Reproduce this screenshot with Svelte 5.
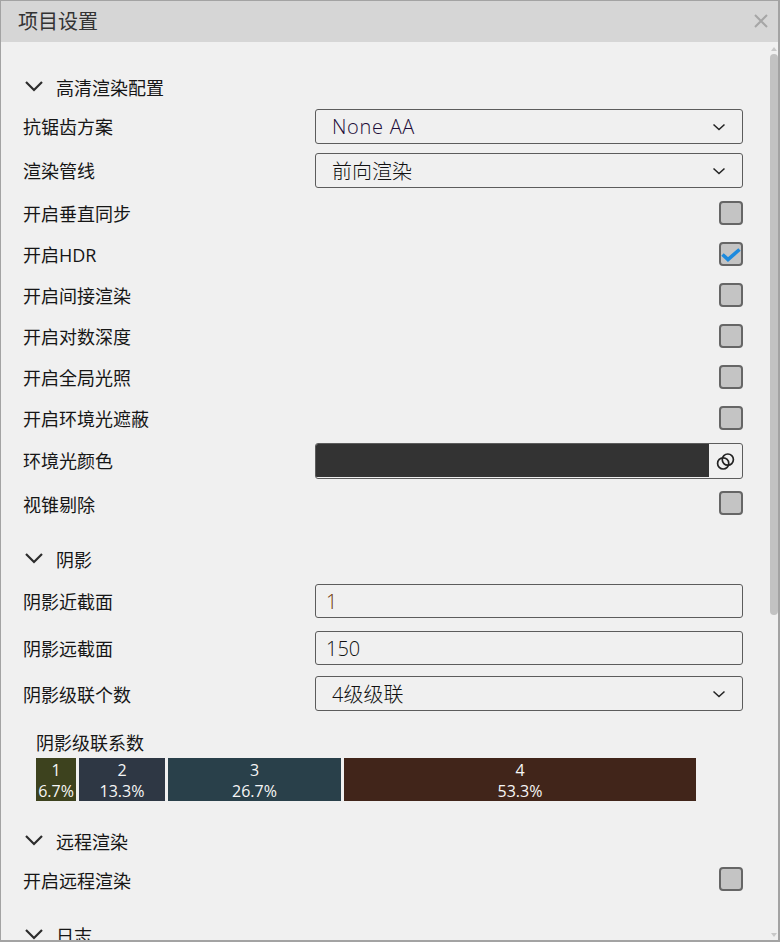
<script>
  const shadowRows = [
    { label: '阴影近截面', value: '1', color: '#6e3200' },
    { label: '阴影远截面', value: '150', color: '#111' }
  ];
  const cascades = [
    { n: 1, pct: '6.7%', w: 40, bg: '#3d421e' },
    { n: 2, pct: '13.3%', w: 86, bg: '#2e3744' },
    { n: 3, pct: '26.7%', w: 173, bg: '#29404a' },
    { n: 4, pct: '53.3%', w: 352, bg: '#41251a' }
  ];
  const toggles = [
    { label: '开启HDR', on: true },
    { label: '开启间接渲染' },
    { label: '开启对数深度' },
    { label: '开启全局光照' },
    { label: '开启环境光遮蔽' }
  ];
</script>

{#snippet chevron()}
  <svg class="chev" width="20" height="12" viewBox="0 0 20 12"><path d="M2 2l8 8 8-8" fill="none" stroke="#2c2c2c" stroke-width="2.2" /></svg>
{/snippet}

{#snippet heading(text)}
  <div class="heading">
    {@render chevron()}
    <span>{text}</span>
  </div>
{/snippet}

{#snippet check(on)}
  <span class="check">
    {#if on}
      <svg width="22" height="22" viewBox="0 0 22 22"><path d="M2.5 11.5l5.5 5 11.5-10" fill="none" stroke="#1c8ade" stroke-width="3.6" /></svg>
    {/if}
  </span>
{/snippet}

{#snippet select(text, cls)}
  <div class="field select {cls}">
    <span>{text}</span>
    <svg width="14" height="8" viewBox="0 0 14 8"><path d="M1.5 1.5L7 6.5l5.5-5" fill="none" stroke="#222" stroke-width="1.5" /></svg>
  </div>
{/snippet}

<div class="window">
  <header>
    <span>项目设置</span>
    <svg width="16" height="16" viewBox="0 0 16 16"><path d="M2 2l12 12M14 2L2 14" stroke="#a6a6a6" stroke-width="2" /></svg>
  </header>

  <div class="body">
    <div class="content">
      {@render heading('高清渲染配置')}
      <div class="row first"><label>抗锯齿方案</label>{@render select('None AA', 'latin')}</div>
      <div class="row second"><label>渲染管线</label>{@render select('前向渲染', '')}</div>
      <div class="row toggle vsync"><label>开启垂直同步</label>{@render check(false)}</div>
      {#each toggles as t}
        <div class="row toggle"><label>{t.label}</label>{@render check(t.on)}</div>
      {/each}
      <div class="row colour">
        <label>环境光颜色</label>
        <div class="swatch">
          <span class="fill"></span>
          <span class="link">
            <svg width="19" height="19" viewBox="0 0 18 18"><circle cx="6.8" cy="10.8" r="5.3" fill="none" stroke="#222" stroke-width="1.6" /><circle cx="11.2" cy="7.2" r="5.3" fill="none" stroke="#222" stroke-width="1.6" /></svg>
          </span>
        </div>
      </div>
      <div class="row toggle cull low"><label>视锥剔除</label>{@render check(false)}</div>

      <div class="shadow">{@render heading('阴影')}</div>
      {#each shadowRows as r, i}
        <div class="row input" class:next={i > 0}>
          <label>{r.label}</label>
          <div class="field text" style="color: {r.color}">{r.value}</div>
        </div>
      {/each}
      <div class="row casc"><label>阴影级联个数</label>{@render select('4级级联', 'tall')}</div>

      <div class="cascade">
        <div class="cascade-title">阴影级联系数</div>
        <div class="bars">
          {#each cascades as c}
            <div class="bar" style="width: {c.w}px; background: {c.bg}">
              <span>{c.n}</span>
              <span>{c.pct}</span>
            </div>
          {/each}
        </div>
      </div>

      <div class="remote">{@render heading('远程渲染')}</div>
      <div class="row toggle rr low"><label>开启远程渲染</label>{@render check(false)}</div>
      <div class="log">{@render heading('日志')}</div>
    </div>

    <div class="scrollbar">
      <i class="up"></i>
      <b></b>
      <i class="down"></i>
    </div>
  </div>
</div>

<style>
  :global(body) {
    margin: 0;
    background: #f0f0f0;
  }

  .window {
    width: 780px;
    height: 942px;
    box-sizing: border-box;
    border: 1px solid #a3a3a3;
    border-width: 1px 2px 2px 1px;
    overflow: hidden;
    background: #f0f0f0;
    font-family: "Open Sans", "Noto Sans CJK SC", sans-serif;
    font-size: 18px;
    color: #161616;
    display: flex;
    flex-direction: column;
  }

  header {
    height: 41px;
    flex: none;
    background: #d6d6d6;
    display: flex;
    align-items: center;
    justify-content: space-between;
    padding: 0 9px 2px 17px;
    box-sizing: border-box;
    font-size: 20px;
    color: #333;
  }

  .body {
    flex: 1;
    display: flex;
    min-height: 0;
  }

  .content {
    width: 742px;
    margin-left: 22px;
    flex: none;
    padding-top: 31px;
    overflow: hidden;
  }

  .heading {
    display: flex;
    align-items: center;
    height: 28px;
  }

  .heading span {
    margin-left: 12px;
  }

  .chev {
    margin-left: 1px;
    margin-top: -3px;
  }

  .row {
    display: flex;
    align-items: center;
    justify-content: space-between;
    width: 720px;
  }

  label {
    line-height: 26px;
    padding-top: 2px;
  }

  .row.first {
    margin-top: 8px;
    height: 35px;
  }

  .row.second {
    margin-top: 9px;
    height: 35px;
  }

  .first label,
  .second label,
  .colour label {
    padding-top: 0;
  }

  .toggle {
    height: 24px;
    margin-top: 17px;
  }

  .vsync {
    margin-top: 13px;
  }

  .low label {
    padding-top: 4px;
  }

  .colour {
    height: 36px;
    margin-top: 13px;
  }

  .cull {
    margin-top: 12px;
  }

  .shadow {
    margin-top: 30px;
  }

  .input {
    height: 34px;
    margin-top: 11px;
  }

  .input.next {
    margin-top: 13px;
  }

  .casc {
    height: 35px;
    margin-top: 11px;
  }

  .field {
    width: 428px;
    height: 100%;
    box-sizing: border-box;
    border: 1px solid #5c5c5c;
    border-radius: 3px;
    display: flex;
    align-items: center;
    font-size: 20px;
    font-weight: 300;
    color: #111;
  }

  .select {
    justify-content: space-between;
    padding: 0 16px;
  }

  .select svg {
    flex: none;
  }

  .latin span {
    letter-spacing: 0.7px;
    color: #1c0c38;
  }

  .text {
    padding-left: 10px;
  }

  .check {
    width: 24px;
    height: 24px;
    box-sizing: border-box;
    border: 2px solid #666;
    border-radius: 4px;
    background: #c4c4c4;
    display: flex;
    align-items: center;
    justify-content: center;
  }

  .check svg {
    flex: none;
  }

  .swatch {
    width: 428px;
    height: 100%;
    box-sizing: border-box;
    border: 1px solid #5c5c5c;
    border-radius: 3px;
    display: flex;
    overflow: hidden;
  }

  .fill {
    flex: 1;
    background: #333;
    margin-bottom: 1px;
  }

  .link {
    width: 33px;
    flex: none;
    display: flex;
    align-items: center;
    justify-content: center;
  }

  .cascade {
    margin: 19px 0 0 13px;
  }

  .cascade-title {
    line-height: 26px;
  }

  .bars {
    display: flex;
    gap: 3px;
    margin-top: 2px;
  }

  .bar {
    height: 43px;
    box-sizing: border-box;
    padding-top: 2px;
    color: #f6f6f6;
    display: flex;
    flex-direction: column;
    align-items: center;
    font-size: 16px;
    line-height: 21px;
    overflow: hidden;
    white-space: nowrap;
  }

  .remote {
    margin-top: 26px;
  }

  .rr {
    margin-top: 12px;
  }

  .log {
    margin-top: 30px;
  }

  .scrollbar {
    width: 8px;
    margin-left: 5px;
    flex: none;
    display: flex;
    flex-direction: column;
    align-items: center;
  }

  .scrollbar b {
    display: block;
    width: 8px;
    height: 561px;
    background: #c2c2c2;
    border-radius: 4px;
    margin-top: 3px;
  }

  .scrollbar i {
    display: block;
    width: 0;
    height: 0;
    border-left: 3px solid transparent;
    border-right: 3px solid transparent;
  }

  .up {
    border-bottom: 4px solid #c8c8c8;
    margin-top: 5px;
  }

  .down {
    border-top: 4px solid #c8c8c8;
    margin-top: auto;
    margin-bottom: 3px;
  }
</style>
